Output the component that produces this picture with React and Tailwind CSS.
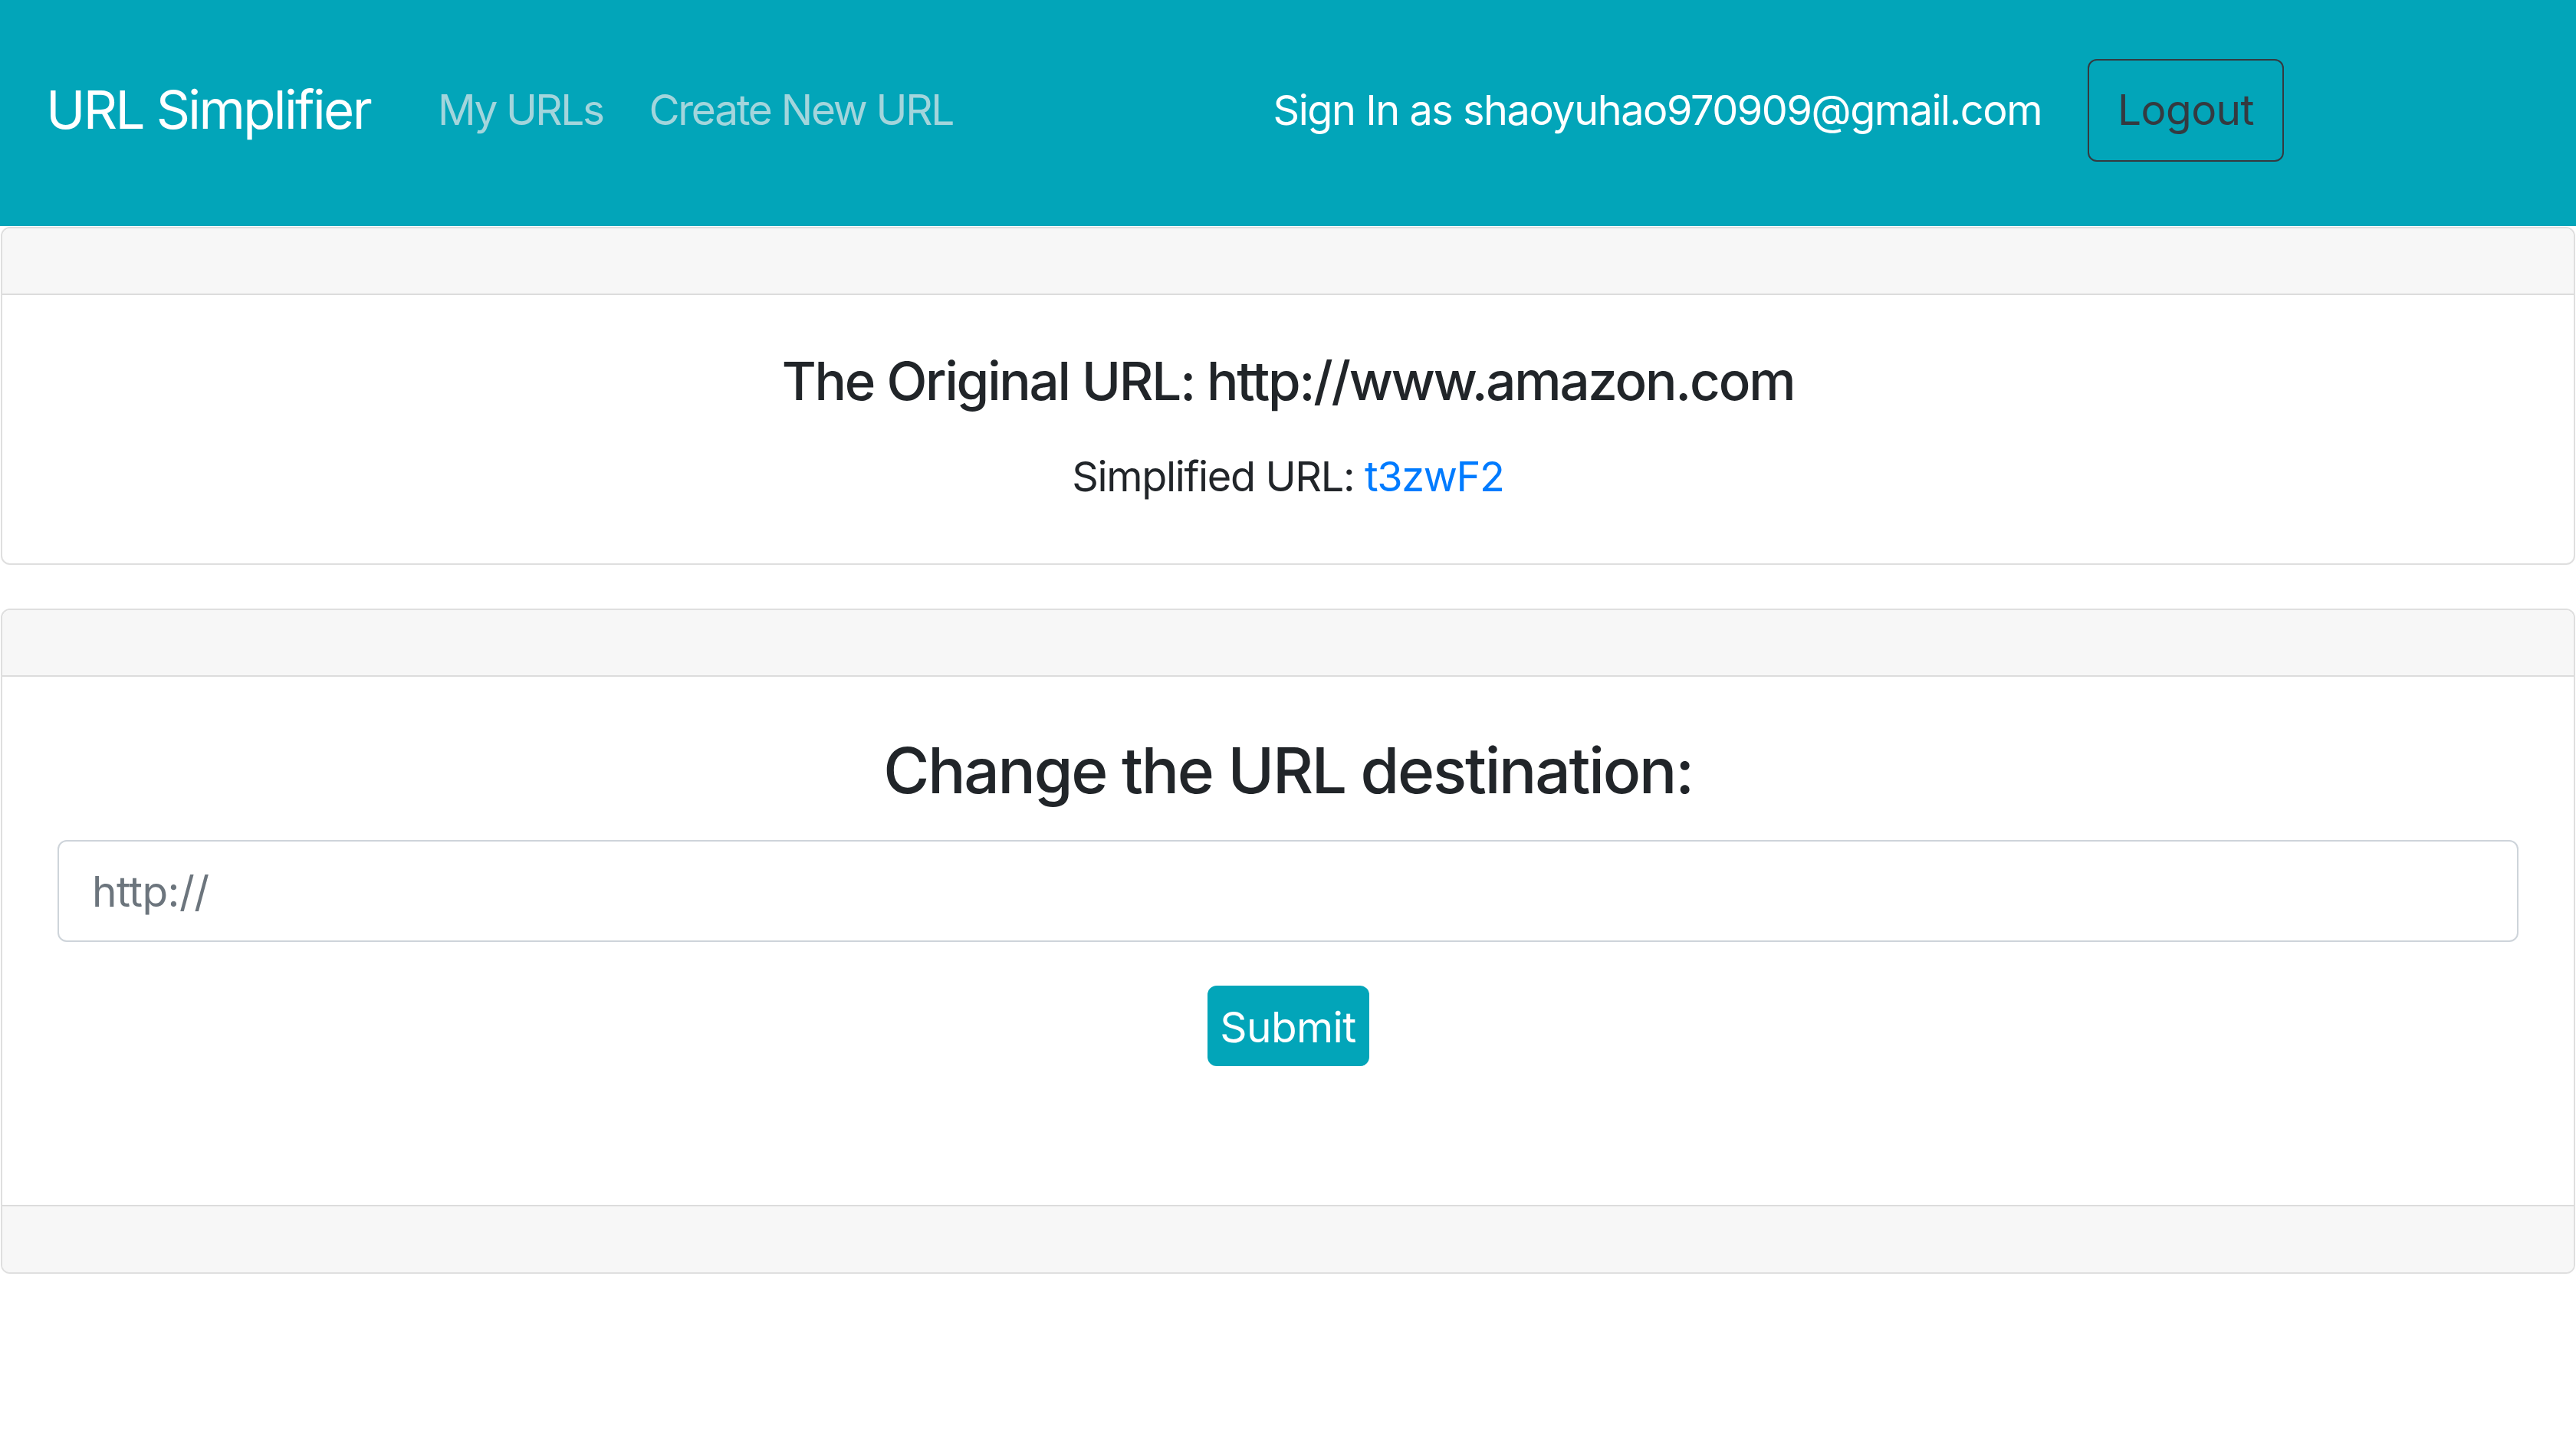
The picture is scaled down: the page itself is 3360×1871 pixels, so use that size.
export default function App() {
  return (
    <div className="min-h-screen bg-white font-['Inter','Liberation_Sans',sans-serif] tracking-[-0.035em] text-[#212529]">
      <nav className="h-[295px] bg-[#02a5b9] flex items-center pl-[60px] pr-[381px] pb-[8px]">
        <a href="#" className="text-[69px] text-white leading-none tracking-[-0.038em]">
          URL Simplifier
        </a>
        <a href="#" className="ml-[88px] text-[55px] text-[#a3d5dc] leading-none tracking-[-0.045em]">
          My URLs
        </a>
        <a href="#" className="ml-[60px] text-[55px] text-[#a3d5dc] leading-none tracking-[-0.042em]">
          Create New URL
        </a>
        <div className="flex-1" />
        <span className="text-[54px] text-white leading-none tracking-[-0.027em]">
          Sign In as shaoyuhao970909@gmail.com
        </span>
        <button className="ml-[60px] w-[256px] h-[134px] border-2 border-[#343a40] rounded-[12px] text-[55px] text-[#343a40] leading-none">
          Logout
        </button>
      </nav>

      <div className="mx-[1px] mt-[1px] border-2 border-[#dfdfdf] rounded-[12px] overflow-hidden">
        <div className="h-[87px] bg-[#f7f7f7] border-b-2 border-[#dcdcdc]" />
        <div className="pt-[70px] pb-[71px] text-center">
          <h5 className="text-[69px] font-medium leading-[85px] tracking-[-0.032em]">
            The Original URL: http://www.amazon.com
          </h5>
          <p className="mt-[39px] text-[54px] leading-[85px] tracking-[-0.025em]">
            Simplified URL:{" "}
            <a href="#" className="text-[#007bff]">
              t3zwF2
            </a>
          </p>
        </div>
      </div>

      <div className="mx-[1px] mt-[57px] border-2 border-[#dfdfdf] rounded-[12px] overflow-hidden">
        <div className="h-[87px] bg-[#f7f7f7] border-b-2 border-[#dcdcdc]" />
        <div className="pt-[72px] pb-[181px] px-[72px] text-center">
          <h4 className="text-[82px] font-medium leading-[101px] tracking-[-0.027em]">
            Change the URL destination:
          </h4>
          <input
            type="text"
            placeholder="http://"
            className="mt-[40px] block w-full h-[133px] border-2 border-[#ced4da] rounded-[12px] pl-[43px] text-[55px] text-[#495057] placeholder:text-[#6c757d] outline-none"
          />
          <button className="mt-[57px] w-[211px] h-[105px] bg-[#02a5b9] rounded-[12px] pt-[4px] text-[55px] text-white leading-none">
            Submit
          </button>
        </div>
        <div className="h-[88px] bg-[#f7f7f7] border-t-2 border-[#dcdcdc]" />
      </div>
    </div>
  );
}
